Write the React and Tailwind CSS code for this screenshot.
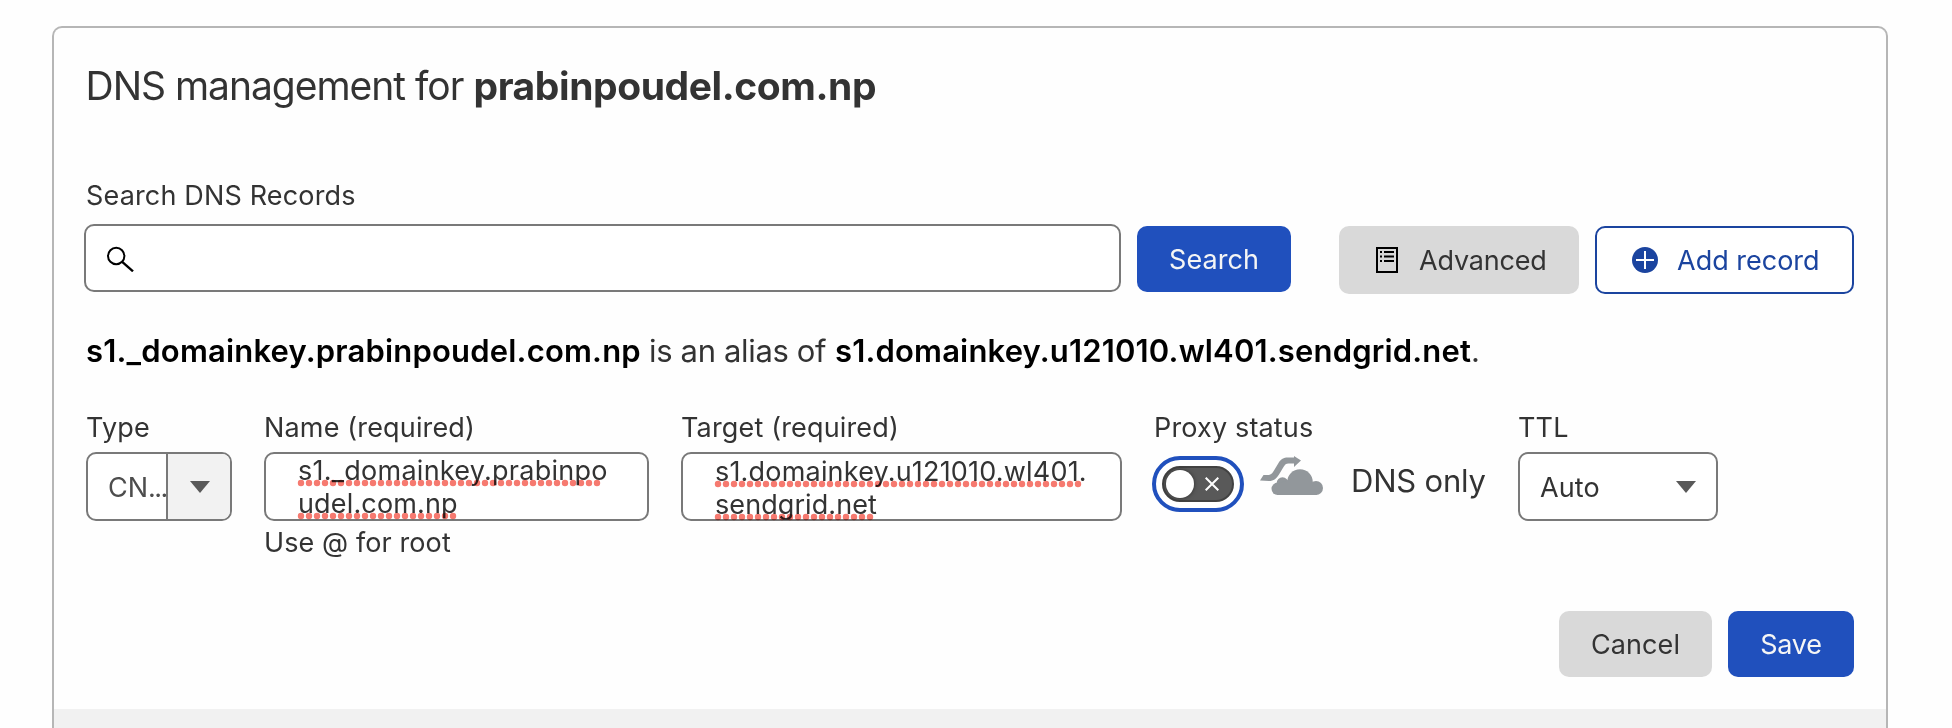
function Squiggle({ count }) {
  return (
    <svg className="absolute left-0 top-[26px] h-[6px] w-[380px] overflow-visible mix-blend-multiply" fill="none">
      <path d={`M3 3H${3 + (count - 1) * 8 + 0.5}`} stroke="#f67a70" strokeWidth="6.4" strokeLinecap="round" strokeDasharray="0 8" />
    </svg>
  );
}

function Misspelled({ text, count, className }) {
  return (
    <span className={"relative block whitespace-nowrap " + className}>
      {text}
      <Squiggle count={count} />
    </span>
  );
}

function Caret() {
  return (
    <svg className="h-[12px] w-[20px]" viewBox="0 0 20 12">
      <path d="M0 0H20L10 12Z" fill="#595959" />
    </svg>
  );
}

function CloudIcon() {
  return (
    <svg className="ml-4 h-[39px] w-[63px]" viewBox="0 0 63 39" fill="#92979b">
      <path d="M0 24.5 3.5 19H7.5C11 19 12 17.5 14 14.5L18.5 7C21 3 23.5 1.5 28 1.5H34V0L41 4.5 34 11V7.5H28.5C26 7.5 25 8.5 23.5 11L19 18.5C16.5 22.5 14 25 9 25Z" />
      <circle cx="17.7" cy="32.8" r="6.2" />
      <circle cx="22.5" cy="27" r="5.8" />
      <circle cx="40" cy="26" r="12.8" />
      <circle cx="56" cy="32" r="7" />
      <path d="M17 39V28L28 24H50L57 39Z" />
    </svg>
  );
}

function Field({ label, className, children }) {
  return (
    <div className={"flex flex-col " + className}>
      <div className="h-8 whitespace-nowrap tracking-[0.16px]">{label}</div>
      {children}
    </div>
  );
}

export default function App() {
  return (
    <div className="h-[728px] w-[1952px] overflow-hidden bg-[#fefefe] pl-[52px] pt-[26px] font-['Inter',sans-serif] text-[27px] leading-8 text-[#333333]">
      <div className="flex h-[702px] w-[1836px] flex-col rounded-t-[10px] border-2 border-b-0 border-[#b6b6b6]">
        <div className="flex h-[681px] flex-col pl-[30px] pt-[34px]">
          <h1 className="flex h-12 whitespace-nowrap pl-[1.5px] text-[39px] leading-[48px]">
            <span className="w-[388px] tracking-[-1.02px]">DNS management for</span>
            <strong className="font-bold tracking-[-0.42px]">prabinpoudel.com.np</strong>
          </h1>
          <label className="mt-[70px] h-8 pl-[2px] tracking-[0.16px]">Search DNS Records</label>
          <div className="mt-3 flex h-[70px] items-start">
            <div className="flex h-[68px] w-[1037px] items-center rounded-[10px] border-2 border-[#797979] bg-white pl-[21px]">
              <svg className="mt-[2px] h-[26px] w-[28px]" viewBox="0 0 28 26" fill="none" stroke="#000" strokeWidth="2">
                <circle cx="9.2" cy="10" r="8.2" />
                <path d="M15.2 15.8 26 25.3" strokeWidth="2.4" />
              </svg>
            </div>
            <button className="ml-4 mt-[2px] h-[66px] w-[154px] rounded-[10px] bg-[#2050bd] pt-[2px] text-[#f5f5f5] tracking-[0.07px]">Search</button>
            <button className="ml-12 mt-[2px] flex h-[68px] w-[240px] items-center rounded-[10px] bg-[#d9d9d9] pl-[37px] tracking-[-0.2px]">
              <svg className="h-[26px] w-[22px]" viewBox="0 0 22 26" fill="none" stroke="#000" strokeWidth="2">
                <rect x="1" y="1" width="20" height="24" />
                <path d="M4 5H6M8 5H18M4 9.5H6M8 9.5H18M4 14H6M8 14H18" />
              </svg>
              <span className="ml-[21px] pt-[2px]">Advanced</span>
            </button>
            <button className="ml-4 mt-[2px] flex h-[68px] w-[259px] items-center rounded-[10px] border-2 border-[#1b449f] bg-white pl-[35px] text-[#1b449f]">
              <svg className="h-[26px] w-[26px]" viewBox="0 0 26 26">
                <circle cx="13" cy="13" r="13" fill="#1b449f" />
                <path d="M4 13H22M13 4V22" stroke="#fff" strokeWidth="2" />
              </svg>
              <span className="ml-[19px] pt-[2px]">Add record</span>
            </button>
          </div>
          <p className="mt-[37px] flex h-10 whitespace-nowrap pl-[2px] text-[31px] leading-10">
            <span className="w-[563px] font-semibold tracking-[0.187px] text-black">s1._domainkey.prabinpoudel.com.np</span>
            <span className="w-[186px] tracking-[-0.34px]">is an alias of</span>
            <span className="font-semibold tracking-[0.166px] text-black">s1.domainkey.u121010.wl401.sendgrid.net</span>
            <span>.</span>
          </p>
          <div className="mt-[41px] flex h-[199px] pl-[2px]">
            <Field label="Type" className="w-[178px]">
              <div className="mt-2 flex h-[69px] w-[146px] overflow-hidden rounded-[10px] border-2 border-[#797979] bg-white">
                <div className="w-[78px] whitespace-nowrap pl-5 pt-[18px] text-[#4d4d4d]">
                  CN<span className="tracking-[-1.6px]">...</span>
                </div>
                <div className="flex flex-1 items-center justify-center border-l-2 border-[#797979] bg-[#f2f2f2] pl-[2px]"><Caret /></div>
              </div>
            </Field>
            <Field label="Name (required)" className="w-[417px]">
              <div className="mt-2 h-[69px] w-[385px] rounded-[10px] border-2 border-[#797979] bg-white pl-8 leading-[33px]">
                <Misspelled text="s1._domainkey.prabinpo" count={38} className="tracking-[0.25px]" />
                <Misspelled text="udel.com.np" count={20} className="tracking-[0.15px]" />
              </div>
              <div className="mt-[6px] h-8 tracking-[0.1px]">Use @ for root</div>
            </Field>
            <Field label="Target (required)" className="w-[473px]">
              <div className="mt-2 h-[69px] w-[441px] rounded-[10px] border-2 border-[#797979] bg-white pl-8 pt-px leading-[33px]">
                <Misspelled text="s1.domainkey.u121010.wl401." count={46} className="tracking-[0.19px]" />
                <Misspelled text="sendgrid.net" count={20} className="tracking-[0.08px]" />
              </div>
            </Field>
            <Field label="Proxy status" className="w-[364px]">
              <div className="mt-3 flex h-14 items-start">
                <div className="-ml-[2px] flex h-14 w-[92px] items-center rounded-full border-4 border-[#2050bd] bg-white p-[6px]">
                  <div className="flex h-9 w-[72px] items-center rounded-full border-2 border-[#424242] bg-[#595959] pl-[2px]">
                    <div className="h-7 w-7 rounded-full bg-white shadow-[0_0_4px_rgba(0,0,0,0.5)]" />
                    <svg className="ml-[11px] h-[14px] w-[14px]" viewBox="0 0 14 14" fill="none" stroke="#fff" strokeWidth="2">
                      <path d="M0.7 0.7 13.3 13.3M13.3 0.7 0.7 13.3" />
                    </svg>
                  </div>
                </div>
                <CloudIcon />
                <span className="ml-7 mt-[5px] whitespace-nowrap text-[31px] leading-10 tracking-[-0.2px]">DNS only</span>
              </div>
            </Field>
            <Field label="TTL" className="w-[200px]">
              <div className="mt-2 flex h-[69px] w-[200px] items-center justify-between rounded-[10px] border-2 border-[#797979] bg-white pl-5 pr-5">
                <span className="pt-[2px] tracking-[0.1px]">Auto</span>
                <Caret />
              </div>
            </Field>
          </div>
          <div className="flex h-[66px] justify-end gap-4 pr-8">
            <button className="h-[66px] w-[153px] rounded-[10px] bg-[#d9d9d9] pt-[2px] tracking-[0.1px]">Cancel</button>
            <button className="h-[66px] w-[126px] rounded-[10px] bg-[#2050bd] pt-[2px] tracking-[-0.2px] text-[#f5f5f5]">Save</button>
          </div>
        </div>
        <div className="flex-1 bg-[#f1f1f1]" />
      </div>
    </div>
  );
}
